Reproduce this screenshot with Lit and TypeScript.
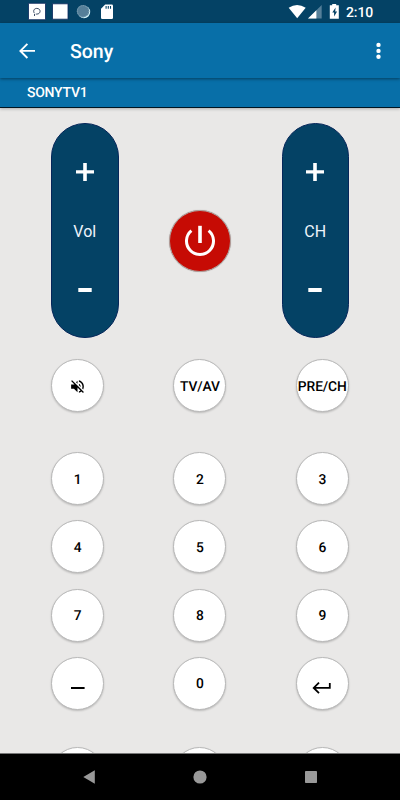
import { LitElement, html, css, svg, nothing } from "lit";
import { customElement, property } from "lit/decorators.js";

@customElement("rocker-control")
class RockerControl extends LitElement {
  @property() label = "";
  static styles = css`
    :host { display: block; }
    .pill {
      box-sizing: border-box; width: 67.5px; height: 215px; border-radius: 34px;
      background: #044265; border: 1px solid #06265a; color: #fff;
      display: flex; flex-direction: column; align-items: center;
      font: 400 16px/20px Roboto, sans-serif; text-rendering: auto;
    }
    .plus { width: 18px; height: 18px; margin-top: 38.6px; }
    .label { margin-top: 41.4px; color: #eef4fb; }
    .minus { width: 14px; height: 4px; margin-top: 45.6px; }
    svg { display: block; }
  `;
  render() {
    return html`<div class="pill">
      <svg class="plus" viewBox="0 0 18 18"><path d="M7.2 0h3.6v7.2H18v3.3h-7.2V18H7.2v-7.5H0V7.2h7.2z" fill="#fff"/></svg>
      <span class="label">${this.label}</span>
      <svg class="minus" viewBox="0 0 14 4"><path d="M.3 0h13.4v4H.3z" fill="#fff"/></svg>
    </div>`;
  }
}

const icons: Record<string, unknown> = {
  mute: svg`<svg width="17" height="17" viewBox="0 0 24 24"><path fill="#000" d="M16.5 12c0-1.77-1.02-3.29-2.5-4.03v2.21l2.45 2.45c.03-.2.05-.41.05-.63zm2.5 0c0 .94-.2 1.82-.54 2.64l1.51 1.51C20.63 14.91 21 13.5 21 12c0-4.28-2.99-7.86-7-8.77v2.06c2.89.86 5 3.54 5 6.71zM4.27 3L3 4.27 7.73 9H3v6h4l5 5v-6.73l4.25 4.25c-.67.52-1.42.93-2.25 1.18v2.06c1.38-.31 2.63-.95 3.69-1.81L19.73 21 21 19.73l-9-9L4.27 3zM12 4L9.91 6.09 12 8.18V4z"/></svg>`,
  dash: svg`<svg width="14" height="12" viewBox="0 0 14 12"><path d="M0 9h13.6v2H0z" fill="#000"/></svg>`,
  enter: svg`<svg width="20" height="20" viewBox="0 0 20 20"><path d="M17.8 8.9v5h-16M7 8.600L1.700 13.900l5.300 5.300" fill="none" stroke="#000" stroke-width="1.800"/></svg>`,
};

@customElement("remote-key")
class RemoteKey extends LitElement {
  @property() label = "";
  @property() icon = "";
  static styles = css`
    :host { display: block; }
    .key {
      box-sizing: border-box; width: 53px; height: 53px; border-radius: 50%; padding-top: 2px;
      background: #fff; border: 1px solid #b8b8b8;
      box-shadow: 0 1px 2px rgba(0,0,0,.2);
      display: flex; align-items: center; justify-content: center;
      font: 500 13.8px/16px Roboto, sans-serif; text-rendering: geometricPrecision;
      letter-spacing: -.1px; color: #000; white-space: nowrap;
    }
    svg { display: block; overflow: visible; }
  `;
  render() {
    return html`<div class="key">${this.icon ? icons[this.icon] : nothing}${this.label}</div>`;
  }
}

const digits = [["1", "2", "3"], ["4", "5", "6"], ["7", "8", "9"]];

@customElement("app-root")
class AppRoot extends LitElement {
  static styles = css`
    :host {
      display: flex; flex-direction: column; width: 400px; height: 800px; overflow: hidden;
      background: #e9e8e7; font-family: Roboto, sans-serif; color: #fff;
      text-rendering: geometricPrecision;
    }
    svg { display: block; flex: none; }
    .status {
      height: 23px; flex: none; background: #044265; display: flex; justify-content: space-between;
    }
    .time { font: 500 14px/26px Roboto, sans-serif; margin-left: 6px; width: 54px; letter-spacing: -.1px; }
    .right { display: flex; }
    .bar {
      height: 55px; flex: none; background: #086fa8; display: flex; align-items: center;
      box-shadow: 0 1px 3px rgba(0,0,0,.45); z-index: 1;
    }
    .back { margin-left: 19px; }
    .title { font: 500 19.5px/24px Roboto, sans-serif; margin: 2px auto 0 35px; }
    .more { margin-right: 19px; }
    .tab {
      box-sizing: border-box; height: 30px; flex: none; background: #086fa8; padding-left: 27px;
      border-bottom: 1px solid #001522; box-shadow: 0 1px 3px rgba(0,0,0,.25);
      font: 500 14px/31px Roboto, sans-serif; letter-spacing: -.25px;
    }
    .remote { flex: 1; min-height: 0; overflow: hidden; padding: 15px 51px 0; }
    .top { display: flex; justify-content: space-between; height: 215px; }
    .power {
      box-sizing: border-box; width: 62px; height: 62px; margin: 87px 0 0; border-radius: 50%;
      background: #c60b04; border: 1px solid #b0a09c; box-shadow: 0 0 1px rgba(0,0,0,.3);
      display: flex; align-items: center; justify-content: center;
    }
    .row { display: flex; justify-content: space-between; width: 297.8px; margin-top: 15.3px; }
    .functions { margin-top: 21.4px; }
    .first { margin-top: 39.7px; }
    .next { margin-top: 36.9px; }
    .nav {
      box-sizing: border-box; height: 47px; flex: none; background: #000; border-top: 1px solid #777;
      display: flex; align-items: center; padding-left: 83px;
    }
    .home { margin-left: 98px; }
    .recent { margin-left: 98px; }
  `;
  render() {
    return html`
      <div class="status">
        <svg width="130" height="23" viewBox="0 0 130 23">
          <path d="M28.5 3.3h17v16.4h-17zM52.5 3.8h15.500v15.400H52.500z" fill="#fff" stroke="#08245b" stroke-width=".8"/>
          <path d="M34.500 16v-2M34.400 13.200c-1.600-2.200-.4-4.800 2.400-4.800 4.400 0 4.300 5.700 0 5.700h-1" fill="none" stroke="#283a55" stroke-width=".9"/>
          <circle cx="84" cy="12" r="6.200" fill="#d5f5fa"/><circle cx="83" cy="11.200" r="6.200" fill="#557f99"/>
          <circle cx="83" cy="11.200" r="5.600" fill="none" stroke="#86a7b9" stroke-width="1" stroke-dasharray="1 1"/>
          <path d="M105.200 4.600h6.500q1.300 0 1.300 1.300v11.800q0 1.300-1.300 1.300h-9.400q-1.300 0-1.300-1.300V8.800z" fill="#fff"/>
          <path d="M106.100 6v2.800M108.300 6v2.800M110.500 6v2.800" stroke="#044265" stroke-width="1.100"/>
        </svg>
        <div class="right">
          <svg width="54" height="23" viewBox="286 0 54 23">
            <path d="M288.700 7.700Q297 2.200 305.700 7.700L297.200 18.200z" fill="#fff"/>
            <path d="M321.700 5v13.600h-13.700z" fill="#557f99"/>
            <path d="M316.400 10.300v8.300H308z" fill="#fff"/>
            <path d="M332.200 4h4v1.300h2.600v13.400h-9V5.300h2.400z" fill="#fff"/>
            <path d="M335.600 7.600l-3.300 5h1.800v3.900l3-5.100h-1.900z" fill="#044265"/>
          </svg>
          <span class="time">2:10</span>
        </div>
      </div>
      <div class="bar">
        <svg class="back" width="16" height="16" viewBox="0 0 16 16"><path d="M16 7.900H1.500M8.400.8L1.400 7.900l7 7.100" fill="none" stroke="#fff" stroke-width="1.900"/></svg>
        <span class="title">Sony</span>
        <svg class="more" width="5" height="18" viewBox="0 0 5 18"><g fill="#fff"><circle cx="2.500" cy="2.900" r="2.200"/><circle cx="2.500" cy="8.900" r="2.200"/><circle cx="2.500" cy="14.800" r="2.200"/></g></svg>
      </div>
      <div class="tab">SONYTV1</div>
      <div class="remote">
        <div class="top">
          <rocker-control label="Vol"></rocker-control>
          <div class="power">
            <svg width="32" height="32" viewBox="0 0 32 32"><path d="M16 .8v17.200" stroke="#fff" stroke-width="3.600"/><path d="M7.400 5.600A13.500 13.500 0 1 0 24.600 5.600" fill="none" stroke="#fff" stroke-width="3"/></svg>
          </div>
          <rocker-control label="CH"></rocker-control>
        </div>
        <div class="row functions">
          <remote-key icon="mute"></remote-key><remote-key label="TV/AV"></remote-key><remote-key label="PRE/CH"></remote-key>
        </div>
        ${digits.map((r, i) => html`<div class="row ${i ? "" : "first"}">${r.map((d) => html`<remote-key label=${d}></remote-key>`)}</div>`)}
        <div class="row">
          <remote-key icon="dash"></remote-key><remote-key label="0"></remote-key><remote-key icon="enter"></remote-key>
        </div>
        <div class="row next"><remote-key></remote-key><remote-key></remote-key><remote-key></remote-key></div>
      </div>
      <div class="nav">
        <svg width="12" height="14" viewBox="0 0 12 14"><path d="M11.800.3v13.400L.3 7z" fill="#999"/></svg>
        <svg class="home" width="14" height="14" viewBox="0 0 14 14"><circle cx="7" cy="7" r="6.600" fill="#999"/></svg>
        <svg class="recent" width="12" height="12" viewBox="0 0 12 12"><rect width="12" height="12" rx=".8" fill="#999"/></svg>
      </div>
    `;
  }
}
